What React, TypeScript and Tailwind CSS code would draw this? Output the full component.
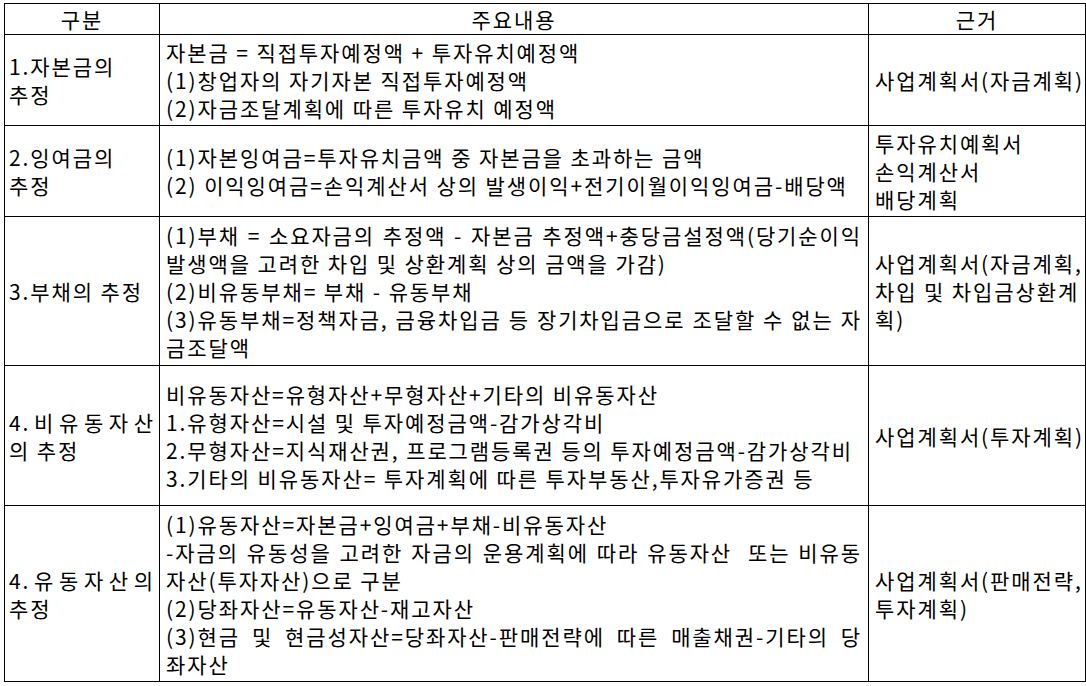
import React from "react";

const J = ({ children }: { children: React.ReactNode }) => (
  <div className="text-justify [text-align-last:justify] whitespace-nowrap">{children}</div>
);
const L = ({ children }: { children: React.ReactNode }) => (
  <div className="whitespace-nowrap">{children}</div>
);
const Spread = ({ parts }: { parts: string[] }) => (
  <div className="flex justify-between whitespace-nowrap">
    {parts.map((p, i) => (
      <span key={i}>{p}</span>
    ))}
  </div>
);

export default function App() {
  const td = "border border-black align-middle";
  return (
    <div
      className="w-[1086px] h-[686px] bg-white text-black pt-[3px] pl-[4px]"
      style={{ fontFamily: '"Noto Sans CJK KR", "Noto Sans", sans-serif' }}
    >
      <table className="border-collapse table-fixed w-[1081px] text-[21px] leading-[28px] tracking-[1.9px]">
        <colgroup>
          <col className="w-[155px]" />
          <col className="w-[709px]" />
          <col className="w-[217px]" />
        </colgroup>
        <tbody>
          <tr className="h-[31px]">
            <td className={`${td} text-center`}>구분</td>
            <td className={`${td} text-center`}>주요내용</td>
            <td className={`${td} text-center`}>근거</td>
          </tr>
          <tr className="h-[91px]">
            <td className={`${td} px-[4px]`}>
              <L>1.자본금의</L>
              <L>추정</L>
            </td>
            <td className={`${td} px-[6px]`}>
              <L>자본금 = 직접투자예정액 + 투자유치예정액</L>
              <L>(1)창업자의 자기자본 직접투자예정액</L>
              <L>(2)자금조달계획에 따른 투자유치 예정액</L>
            </td>
            <td className={`${td} pl-[6px] overflow-hidden`}>
              <L>사업계획서(자금계획)</L>
            </td>
          </tr>
          <tr className="h-[91px]">
            <td className={`${td} px-[4px]`}>
              <L>2.잉여금의</L>
              <L>추정</L>
            </td>
            <td className={`${td} px-[6px]`}>
              <L>(1)자본잉여금=투자유치금액 중 자본금을 초과하는 금액</L>
              <L>(2) 이익잉여금=손익계산서 상의 발생이익+전기이월이익잉여금-배당액</L>
            </td>
            <td className={`${td} pl-[6px]`}>
              <L>투자유치예획서</L>
              <L>손익계산서</L>
              <L>배당계획</L>
            </td>
          </tr>
          <tr className="h-[149px]">
            <td className={`${td} px-[4px]`}>
              <L>3.부채의 추정</L>
            </td>
            <td className={`${td} px-[6px] overflow-hidden`}>
              <J>(1)부채 = 소요자금의 추정액 - 자본금 추정액+충당금설정액(당기순이익</J>
              <L>발생액을 고려한 차입 및 상환계획 상의 금액을 가감)</L>
              <L>(2)비유동부채= 부채 - 유동부채</L>
              <J>(3)유동부채=정책자금, 금융차입금 등 장기차입금으로 조달할 수 없는 자</J>
              <L>금조달액</L>
            </td>
            <td className={`${td} pl-[6px]`}>
              <L>사업계획서(자금계획,</L>
              <L>차입 및 차입금상환계</L>
              <L>획)</L>
            </td>
          </tr>
          <tr className="h-[140px]">
            <td className={`${td} px-[4px]`}>
              <Spread parts={["4.", "비", "유", "동", "자", "산"]} />
              <L>의 추정</L>
            </td>
            <td className={`${td} px-[6px]`}>
              <L>비유동자산=유형자산+무형자산+기타의 비유동자산</L>
              <L>1.유형자산=시설 및 투자예정금액-감가상각비</L>
              <L>2.무형자산=지식재산권, 프로그램등록권 등의 투자예정금액-감가상각비</L>
              <L>3.기타의 비유동자산= 투자계획에 따른 투자부동산,투자유가증권 등</L>
            </td>
            <td className={`${td} pl-[6px] overflow-hidden`}>
              <L>사업계획서(투자계획)</L>
            </td>
          </tr>
          <tr className="h-[176px]">
            <td className={`${td} px-[4px]`}>
              <Spread parts={["4.", "유", "동", "자", "산", "의"]} />
              <L>추정</L>
            </td>
            <td className={`${td} px-[6px] overflow-hidden`}>
              <L>(1)유동자산=자본금+잉여금+부채-비유동자산</L>
              <J>-자금의 유동성을 고려한 자금의 운용계획에 따라 유동자산&nbsp; 또는 비유동</J>
              <L>자산(투자자산)으로 구분</L>
              <L>(2)당좌자산=유동자산-재고자산</L>
              <J>(3)현금 및 현금성자산=당좌자산-판매전략에 따른 매출채권-기타의 당</J>
              <L>좌자산</L>
            </td>
            <td className={`${td} pl-[6px]`}>
              <L>사업계획서(판매전략,</L>
              <L>투자계획)</L>
            </td>
          </tr>
        </tbody>
      </table>
    </div>
  );
}
